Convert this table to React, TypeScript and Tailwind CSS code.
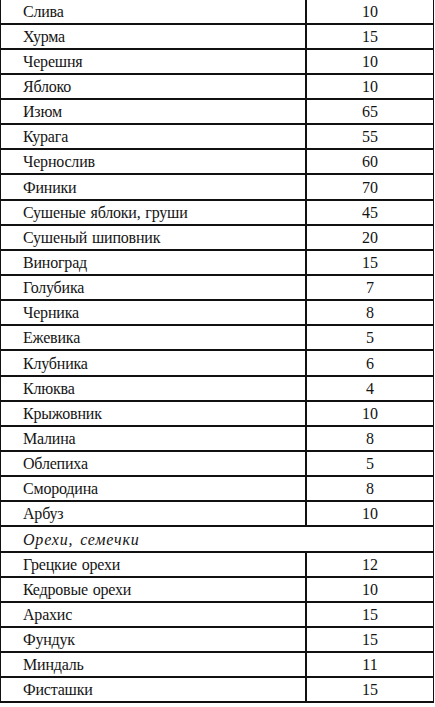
const ROWS: [string, string][] = [
  ["Слива", "10"],
  ["Хурма", "15"],
  ["Черешня", "10"],
  ["Яблоко", "10"],
  ["Изюм", "65"],
  ["Курага", "55"],
  ["Чернослив", "60"],
  ["Финики", "70"],
  ["Сушеные яблоки, груши", "45"],
  ["Сушеный шиповник", "20"],
  ["Виноград", "15"],
  ["Голубика", "7"],
  ["Черника", "8"],
  ["Ежевика", "5"],
  ["Клубника", "6"],
  ["Клюква", "4"],
  ["Крыжовник", "10"],
  ["Малина", "8"],
  ["Облепиха", "5"],
  ["Смородина", "8"],
  ["Арбуз", "10"],
];

const NUTS: [string, string][] = [
  ["Грецкие орехи", "12"],
  ["Кедровые орехи", "10"],
  ["Арахис", "15"],
  ["Фундук", "15"],
  ["Миндаль", "11"],
  ["Фисташки", "15"],
];

function Row({ name, value }: { name: string; value: string }) {
  return (
    <div className="grid h-[25.15px] grid-cols-[306px_1fr] border-b-2 border-[#111]">
      <div className="flex items-center border-r-2 border-[#111] pl-[22px] pt-[1px] tracking-[-0.2px] [word-spacing:1px]">
        {name}
      </div>
      <div className="flex items-center justify-center pt-[1px]">{value}</div>
    </div>
  );
}

export default function App() {
  return (
    <div className="w-[435px] bg-white font-['Liberation_Serif','Times_New_Roman',serif] text-[16px] leading-none text-[#141414]">
      <div className="mr-[1px] -mt-[0.5px] border-x border-x-[#111]">
        {ROWS.map(([n, v]) => (
          <Row key={n} name={n} value={v} />
        ))}
        <div className="flex h-[25.15px] items-center border-b-2 border-[#111] pl-[22px] pt-[1px] italic tracking-[0.8px] [word-spacing:2px]">
          Орехи, семечки
        </div>
        {NUTS.map(([n, v]) => (
          <Row key={n} name={n} value={v} />
        ))}
      </div>
    </div>
  );
}
